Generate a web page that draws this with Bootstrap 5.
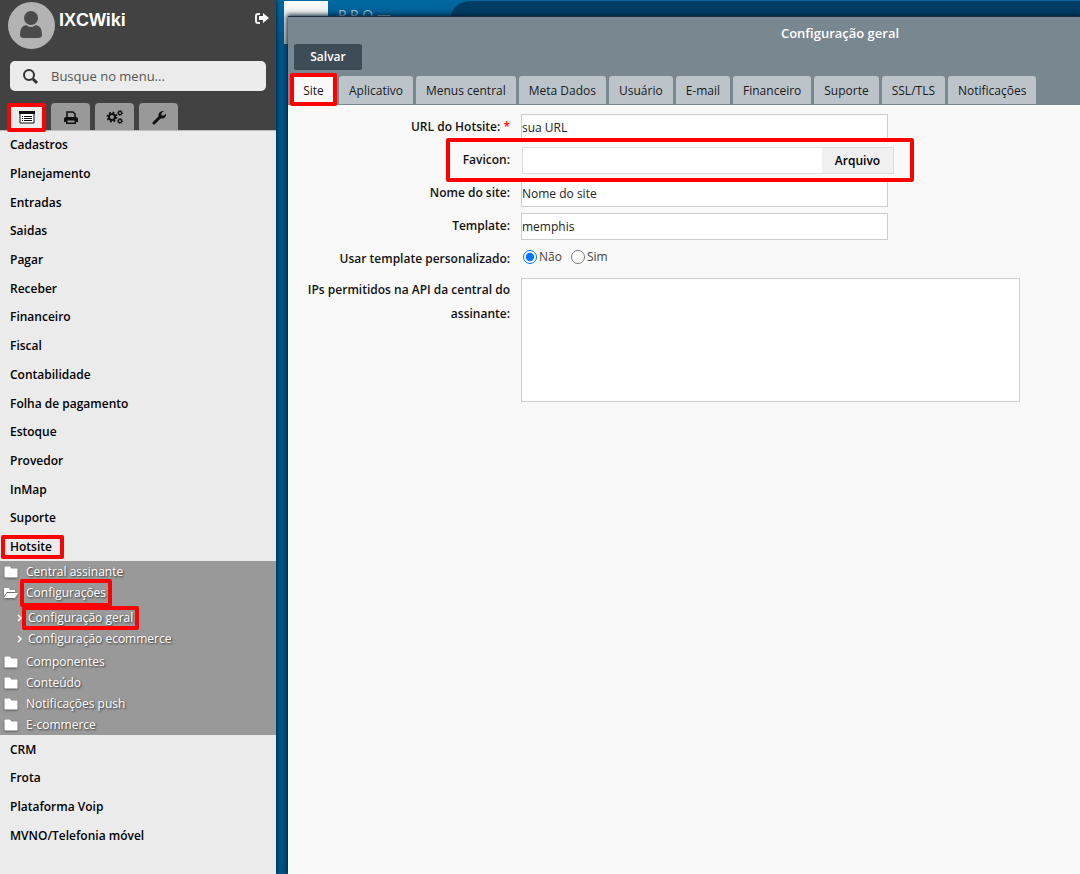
<!DOCTYPE html>
<html lang="pt-BR">
<head>
<meta charset="utf-8">
<meta name="viewport" content="width=device-width, initial-scale=1">
<title>IXCWiki - Configuração geral</title>
<link href="https://cdn.jsdelivr.net/npm/bootstrap@5.3.0/dist/css/bootstrap.min.css" rel="stylesheet">
<style>
body{font-family:"Open Sans","Noto Sans",sans-serif;font-size:12px;line-height:18px;color:#111;background:#005487}
a{color:inherit;text-decoration:none}
.side{width:276px;background:#ebebeb;z-index:2;box-shadow:1px 0 3px #002b48}
.side-top{background:#424242;height:130px}
.avatar{width:47px;height:47px;background:#b3b3b3;color:#4b4b4b;margin-top:2px}
.user-name{font:bold 18px/22px "Liberation Sans",sans-serif;margin-top:9px}
.exit{margin-top:11px;height:14px}
.search{height:30px;background:#ebebeb;border-radius:5px;margin:12px 10px 0}
.search input{font-size:13px;color:#555;outline:0}
.search input::placeholder{color:#555;opacity:1}
.side-tabs{gap:5px;padding-left:7px}
.side-tab{width:39px;height:27px;background:#999;border-radius:4px 4px 0 0;color:#0d0d0d}
.side-tab.on{background:#ebebeb}
.menu{padding-bottom:24px;border-top:1px solid #bbb}
.menu-item{flex:1 1 28px;min-height:28px;padding-left:10px;font-weight:600;color:#000}
.submenu{background:#999;color:#fff;text-shadow:1px 1px 2px #333}
.submenu a{height:21px;padding-left:4px}
.submenu .folder{width:14px;margin-right:8px;filter:drop-shadow(0 1px 1px #555)}
.submenu .leaf{padding-left:17px}
.submenu .leaf svg{margin-right:5px}
.leaves{padding:4px 0 2px}
.marked{position:relative}
.marked::after{content:"";position:absolute;border:4px solid #f00;border-radius:2px;pointer-events:none;inset:var(--in);z-index:3}
.desk{background:linear-gradient(#0068a2,#005487 40px);padding:16px 0 0 12px;overflow:hidden}
.desk-shape{position:absolute;left:174px;right:0;top:1px;height:60px;background:#003d65;border-radius:20px 0 0 0}
.desk-logo{position:absolute;left:8px;top:1px;width:44px;height:43px;background:linear-gradient(#fff,#bbb)}
.desk-text{position:absolute;left:62px;top:6px;font-size:14px;color:#a5c6d9;white-space:pre}
.win{position:relative;background:#f9f9f9;border-top:1px solid #1d3140;box-shadow:0 0 5px 1px #001e35}
.win-head{background:#798791;height:88px}
.win-title{font-size:13px;font-weight:600;color:#fff;padding-left:312px;height:27px;padding-top:9px}
.save{width:68px;height:26px;background:#3e4c57;color:#fff;border:0;border-radius:2px;font-weight:600;margin-left:6px}
.tabs{gap:3px;padding-left:3px;margin-top:6px;height:29px}
.tab{height:28px;border:0;background:#bcc4ca;color:#1a1a1a;border-radius:3px 3px 0 0;padding:1px 10px 0;white-space:nowrap}
.tab.on{background:#f9f9f9;width:45px;padding:1px 0 0}
.fields{padding-top:9px;gap:6px}
.line{gap:11px;padding-right:60px}
.line>label,.line>.lbl{width:222px;flex:none;text-align:right;font-weight:600;padding-top:4px}
.star{color:#f00}
.box{height:27px;flex:0 1 367px;min-width:0;border:1px solid #ccc;background:#fff;padding:0;color:#222;outline:0}
.area{height:124px;flex:0 1 500px;min-width:0;border:1px solid #ccc;background:#fff;resize:none}
.filebox{flex:0 1 372px;margin-left:1px}
.filebox input{min-width:0;border:1px solid #ddd;border-right:0;height:27px}
.filebox button{width:72px;border:1px solid #ddd;border-left:0;background:#f0f0f0;font-weight:600}
.opts{color:#444}
.opt{width:14px;height:14px;margin:0 2px}
.line>.tall{line-height:24px;padding:0}
</style>
</head>
<body>
<div class="d-flex min-vh-100">
<aside class="side d-flex flex-column flex-shrink-0">
  <div class="side-top d-flex flex-column">
    <div class="d-flex ps-2" style="padding-right:6px">
      <div class="avatar rounded-circle"><svg width="47" height="47" viewBox="0 0 47 47" fill="currentColor"><path d="M12 33q0-9 6-10 5 4 10 0 6 1 6 10 0 3-4 3H16q-4 0-4-3Z"/><circle cx="23" cy="16" r="7"/></svg></div>
      <div class="user-name text-white flex-grow-1 ps-1">IXCWiki</div>
      <a href="#" class="exit text-white" aria-label="Sair"><svg class="d-block" width="16" height="14" viewBox="0 0 16 14"><path d="M6 3H4Q2 3 2 5v5q0 2 2 2h2" fill="none" stroke="#eee" stroke-width="2"/><path d="M5 5h4V2l6 5-6 5V9H5Z" fill="#fff"/></svg></a>
    </div>
    <div class="search d-flex align-items-center">
      <label for="q" class="d-flex"><svg class="ms-2" style="margin-right:7px" width="26" height="18" viewBox="0 0 26 18" fill="none" stroke="#333" stroke-width="2"><circle cx="11" cy="8" r="5"/><path d="m15 12 4 4" stroke-width="3"/></svg></label>
      <input id="q" class="border-0 bg-transparent p-0 flex-grow-1" placeholder="Busque no menu...">
    </div>
    <div class="side-tabs d-flex mt-auto">
      <button class="side-tab on marked border-0 p-0" style="--in:0 0 -2px 0" aria-label="Menu"><svg width="16" height="14" viewBox="0 0 16 14"><path d="M1 2h14v11H1Z" fill="#fff" stroke="#111"/><path d="M0 1h16v3H0Z" fill="#111"/><path d="M3 6.500h1m1 0h8M3 8.500h1m1 0h8M3 10.500h1m1 0h8" stroke="#111"/></svg></button>
      <button class="side-tab border-0 p-0" aria-label="Imprimir"><svg width="16" height="16" viewBox="0 0 16 16"><path d="M4 9V3h6l2 2v4" fill="none" stroke="#111" stroke-width="1.500"/><path d="M1 10q0-2 2-2h10q2 0 2 2v3h-2v2H3v-2H1Z" fill="#111"/><path d="M4.500 11.500h7v2h-7Z" fill="#999"/></svg></button>
      <button class="side-tab border-0 p-0" aria-label="Ajustes"><svg width="18" height="16" viewBox="0 0 18 16" fill="none" stroke="#111"><circle cx="6" cy="8" r="3" stroke-width="2"/><circle cx="6" cy="8" r="4.500" stroke-width="2" stroke-dasharray="1.800 1.734"/><circle cx="14" cy="4" r="1.600" stroke-width="1.200"/><circle cx="14" cy="4" r="2.500" stroke-dasharray="1 .963"/><circle cx="14" cy="12" r="1.600" stroke-width="1.200"/><circle cx="14" cy="12" r="2.500" stroke-dasharray="1 .963"/></svg></button>
      <button class="side-tab border-0 p-0" aria-label="Ferramentas"><svg width="16" height="16" viewBox="0 0 16 16"><path d="m3 14 6-6" stroke="#111" stroke-width="3" stroke-linecap="round"/><path d="M13 2 10.500 4v2.500H13l2-2q.5 3-2 4.500-2 1-4 0Q6.500 7 8 4q2-2.500 5-2Z" fill="#111"/></svg></button>
    </div>
  </div>
  <nav class="menu d-flex flex-column flex-grow-1">
    <a href="#" class="menu-item d-flex align-items-center">Cadastros</a>
    <a href="#" class="menu-item d-flex align-items-center">Planejamento</a>
    <a href="#" class="menu-item d-flex align-items-center">Entradas</a>
    <a href="#" class="menu-item d-flex align-items-center">Saidas</a>
    <a href="#" class="menu-item d-flex align-items-center">Pagar</a>
    <a href="#" class="menu-item d-flex align-items-center">Receber</a>
    <a href="#" class="menu-item d-flex align-items-center">Financeiro</a>
    <a href="#" class="menu-item d-flex align-items-center">Fiscal</a>
    <a href="#" class="menu-item d-flex align-items-center">Contabilidade</a>
    <a href="#" class="menu-item d-flex align-items-center">Folha de pagamento</a>
    <a href="#" class="menu-item d-flex align-items-center">Estoque</a>
    <a href="#" class="menu-item d-flex align-items-center">Provedor</a>
    <a href="#" class="menu-item d-flex align-items-center">InMap</a>
    <a href="#" class="menu-item d-flex align-items-center">Suporte</a>
    <a href="#" class="menu-item d-flex align-items-center"><span class="marked" style="--in:-3px -12px -3px -9px">Hotsite</span></a>
    <div class="submenu">
      <a href="#" class="d-flex align-items-center"><svg class="folder" width="14" height="12" viewBox="0 0 14 12"><path d="M1 1h5l1 2h6v8H1Z" fill="#fff" stroke="#fff" stroke-linejoin="round"/></svg>Central assinante</a>
      <a href="#" class="d-flex align-items-center"><svg class="folder" width="14" height="12" viewBox="0 0 14 12"><path d="M0 9V1h5l1 2h5v2H3Z" fill="#fff"/><path d="M3 6h11l-3 5H0Z" fill="#fff"/></svg><span class="marked" style="--in:-5px -6px -5px -6px">Configurações</span></a>
      <div class="leaves">
        <a href="#" class="leaf d-flex align-items-center"><svg width="6" height="8" viewBox="0 0 6 8" fill="none" stroke="#fff" stroke-width="1.500"><path d="m1 1 3 3-3 3"/></svg><span class="marked" style="--in:-3px -6px -3px -6px">Configuração geral</span></a>
        <a href="#" class="leaf d-flex align-items-center"><svg width="6" height="8" viewBox="0 0 6 8" fill="none" stroke="#fff" stroke-width="1.500"><path d="m1 1 3 3-3 3"/></svg>Configuração ecommerce</a>
      </div>
      <a href="#" class="d-flex align-items-center"><svg class="folder" width="14" height="12" viewBox="0 0 14 12"><path d="M1 1h5l1 2h6v8H1Z" fill="#fff" stroke="#fff" stroke-linejoin="round"/></svg>Componentes</a>
      <a href="#" class="d-flex align-items-center"><svg class="folder" width="14" height="12" viewBox="0 0 14 12"><path d="M1 1h5l1 2h6v8H1Z" fill="#fff" stroke="#fff" stroke-linejoin="round"/></svg>Conteúdo</a>
      <a href="#" class="d-flex align-items-center"><svg class="folder" width="14" height="12" viewBox="0 0 14 12"><path d="M1 1h5l1 2h6v8H1Z" fill="#fff" stroke="#fff" stroke-linejoin="round"/></svg>Notificações push</a>
      <a href="#" class="d-flex align-items-center"><svg class="folder" width="14" height="12" viewBox="0 0 14 12"><path d="M1 1h5l1 2h6v8H1Z" fill="#fff" stroke="#fff" stroke-linejoin="round"/></svg>E-commerce</a>
    </div>
    <a href="#" class="menu-item d-flex align-items-center">CRM</a>
    <a href="#" class="menu-item d-flex align-items-center">Frota</a>
    <a href="#" class="menu-item d-flex align-items-center">Plataforma Voip</a>
    <a href="#" class="menu-item d-flex align-items-center">MVNO/Telefonia móvel</a>
  </nav>
</aside>
<main class="desk position-relative flex-grow-1 d-flex">
  <div class="desk-shape"></div><div class="desk-logo"></div><div class="desk-text">P R O —</div>
  <section class="win flex-grow-1">
    <header class="win-head">
      <h1 class="win-title text-center m-0">Configuração geral</h1>
      <button class="save p-0 d-block">Salvar</button>
      <div class="tabs d-flex" role="tablist">
        <button class="tab on marked" style="--in:-3px -1px -2px -1px" role="tab" aria-selected="true">Site</button>
        <button class="tab" role="tab">Aplicativo</button>
        <button class="tab" role="tab">Menus central</button>
        <button class="tab" role="tab">Meta Dados</button>
        <button class="tab" role="tab">Usuário</button>
        <button class="tab" role="tab">E-mail</button>
        <button class="tab" role="tab">Financeiro</button>
        <button class="tab" role="tab">Suporte</button>
        <button class="tab" role="tab">SSL/TLS</button>
        <button class="tab" role="tab">Notificações</button>
      </div>
    </header>
    <form class="fields d-flex flex-column">
      <div class="line d-flex"><label for="url">URL do Hotsite: <span class="star">*</span></label><input class="box" id="url" value="sua URL"></div>
      <div class="line d-flex"><label for="fav">Favicon:</label><div class="filebox d-flex marked" style="--in:-9px -20px -8px -76px"><input class="flex-grow-1 bg-white" id="fav"><button type="button" class="p-0">Arquivo</button></div></div>
      <div class="line d-flex"><label for="nome">Nome do site:</label><input class="box" id="nome" value="Nome do site"></div>
      <div class="line d-flex"><label for="tpl">Template:</label><input class="box" id="tpl" value="memphis"></div>
      <div class="line d-flex" style="height:26px"><div class="lbl">Usar template personalizado:</div>
        <div class="opts d-flex align-items-center pb-1"><input class="opt" type="radio" name="p" id="nao" checked><label for="nao" style="margin-right:7px">Não</label><input class="opt" type="radio" name="p" id="sim"><label for="sim">Sim</label></div></div>
      <div class="line d-flex"><label for="ips" class="tall">IPs permitidos na API da central do assinante:</label><textarea class="area" id="ips"></textarea></div>
    </form>
  </section>
</main>
</div>
<script src="https://cdn.jsdelivr.net/npm/bootstrap@5.3.0/dist/js/bootstrap.bundle.min.js"></script>
</body>
</html>
